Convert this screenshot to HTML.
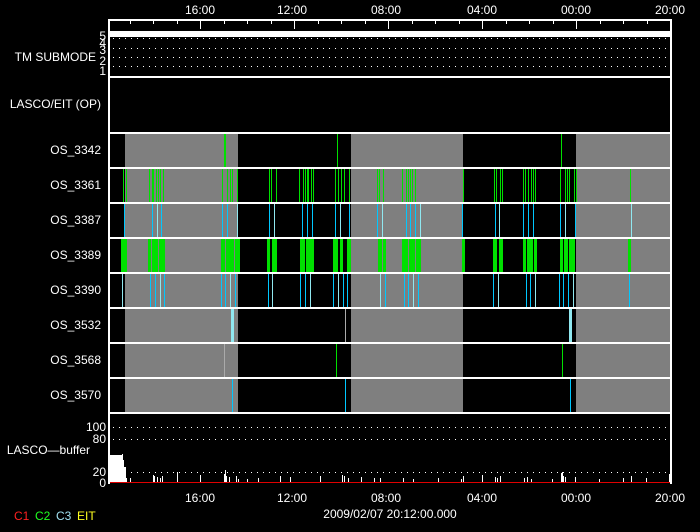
<!DOCTYPE html>
<html><head><meta charset="utf-8"><style>
html,body{margin:0;padding:0;background:#000;}
#c{position:relative;width:700px;height:532px;overflow:hidden;background:#000;font-family:"Liberation Sans",sans-serif;color:#fff;font-size:12px;}
.a{position:absolute;}
.t{position:absolute;white-space:nowrap;line-height:12px;}
</style></head><body><div id="c"></div>
<script>
var c=document.getElementById('c');
function r(x,y,w,h,col){var d=document.createElement('div');d.className='a';d.style.cssText='left:'+x+'px;top:'+y+'px;width:'+w+'px;height:'+h+'px;background:'+col;c.appendChild(d);}
function t(x,y,s,col,al){var d=document.createElement('div');d.className='t';d.textContent=s;d.style.top=y+'px';d.style.color=col||'#fff';if(al=='r'){d.style.right=(700-x)+'px';}else if(al=='c'){d.style.left=(x-100)+'px';d.style.width='200px';d.style.textAlign='center';}else d.style.left=x+'px';c.appendChild(d);}
var L=108,R=671;
// gray regions rows 132..412
[[125,238],[351,463],[576,671]].forEach(function(g){r(g[0],132,g[1]-g[0],280,'#7f7f7f');});
var rows=[132,167,202,237,272,307,342,377,412];
var G='#00e000',C='#00c8ff',LC='#90e8f0';
function lines(y0,xs,col,w){xs.forEach(function(x){r(x,y0,w||1,35,col);});}
function blocks(y0,bs,col){bs.forEach(function(b){r(b[0],y0,b[1]-b[0],35,col);});}
// 3342
lines(132,[224,225,337,561],G);
// 3361
lines(167,[123,126,149,152,153,156,158,160,163,222,227,230,232,237,269,271,276,299,303,305,307,308,311,313,335,338,341,344,349,377,379,383,402,406,408,410,412,415,463,494,496,500,502,523,525,528,531,533,535,560,565,567,569,574,576,630],G);
// 3387
lines(202,[124,152,157,161],C);lines(202,[222,227,237,269,274,302,307,312,335,340,349,377,382,406,410,415,420,462,495,499,523,528,533,560,565,575,631],C);
lines(202,[157,237,274,340,382,420,499,565,631],LC);
// 3389
blocks(237,[[121,127],[148,151],[152,158],[159,165],[221,225],[226,234],[235,240],[267,270],[272,277],[300,305],[306,314],[333,338],[340,343],[347,351],[378,382],[383,386],[402,408],[409,415],[416,421],[462,465],[493,497],[499,503],[523,526],[527,533],[534,537],[560,563],[564,568],[569,575],[628,631]],G);
// 3390
lines(272,[122,150,155,160,164,221,225,230,235,268,272,300,305,310,333,338,347,343,380,385,404,408,413,418,493,498,526,530,535,559,563,568,573,629],C);
lines(272,[122,160,230,272,310,338,380,413,498,535,573],LC);
// 3532
r(231,307,3,35,LC);r(345,307,1,35,'#aaa');r(569,307,3,35,LC);
// 3568
lines(342,[336,562],G);lines(342,[224],'#aaa');
// 3570
lines(377,[232,345,570],C);
// row separators
rows.forEach(function(y){r(L,y,R-L,2,'#fff');});
r(L,76,R-L,2,'#fff');
// frame
r(L,19,R-L,2,'#fff');r(L,19,2,465,'#fff');r(R-1,19,2,465,'#fff');
// TM submode bar
r(L+2,31,R-L-3,6,'#fff');
function dots(y){for(var x=113;x<R-2;x+=6)r(x,y,1,1,'#fff');}
[38,48,57,66].forEach(dots);
// ticks top
for(var i=0;i<=24;i++){var x=Math.round(106+i*94/4);if(x<=L||x>=R)continue;var maj=(i%4==0);r(x,19,1,maj?10:5,'#fff');}
r(200,19,1,10,'#fff');
// labels top/bottom
var tl=[[200,'16:00'],[292,'12:00'],[386,'08:00'],[482,'04:00'],[576,'00:00'],[670,'20:00']];
tl.forEach(function(a){t(a[0],4,a[1],'#fff','c');t(a[0],492,a[1],'#fff','c');});
// left labels
t(96,51,'TM SUBMODE','#fff','r');
t(106,30,'5','#fff','r');t(106,37,'4','#fff','r');t(106,44,'3','#fff','r');t(106,55,'2','#fff','r');t(106,65,'1','#fff','r');
t(101,98,'LASCO/EIT (OP)','#fff','r');
var nm=['OS_3342','OS_3361','OS_3387','OS_3389','OS_3390','OS_3532','OS_3568','OS_3570'];
nm.forEach(function(n,i){t(101,rows[i]+12,n,'#fff','r');});
// buffer panel
[427,439,472].forEach(dots);
t(106,421,'100','#fff','r');t(106,433,'80','#fff','r');t(90,444,'LASCO\u2014buffer','#fff','r');t(106,466,'20','#fff','r');t(106,477,'0','#fff','r');
r(110,455,12,28,'#fff');r(122,454,1,29,'#fff');r(122,460,2,23,'#fff');r(124,467,2,16,'#fff');r(126,478,1,5,'#fff');
var sp=[[130,478],[153,475],[154,476],[157,477],[160,478],[162,476],[177,472],[200,475],[224,474],[225,470],[226,476],[229,477],[236,476],[238,479],[247,479],[258,478],[280,476],[290,477],[320,476],[342,475],[344,476],[348,478],[361,477],[374,478],[380,478],[403,478],[413,479],[438,478],[461,479],[463,476],[482,475],[495,477],[497,478],[500,476],[524,478],[527,477],[531,479],[552,479],[561,473],[562,472],[563,476],[565,477],[575,477],[599,479],[623,478],[631,476],[646,478],[669,474]];
sp.forEach(function(s){r(s[0],s[1],1,483-s[1],'#fff');});
r(L+2,482,R-L-3,1,'#e00000');
// bottom text
t(390,508,'2009/02/07 20:12:00.000','#fff','c');
t(14,510,'C1','#ff2020');t(35,510,'C2','#20ff20');t(56,510,'C3','#a0e0f0');t(77,510,'EIT','#ffff20');
</script></body></html>
